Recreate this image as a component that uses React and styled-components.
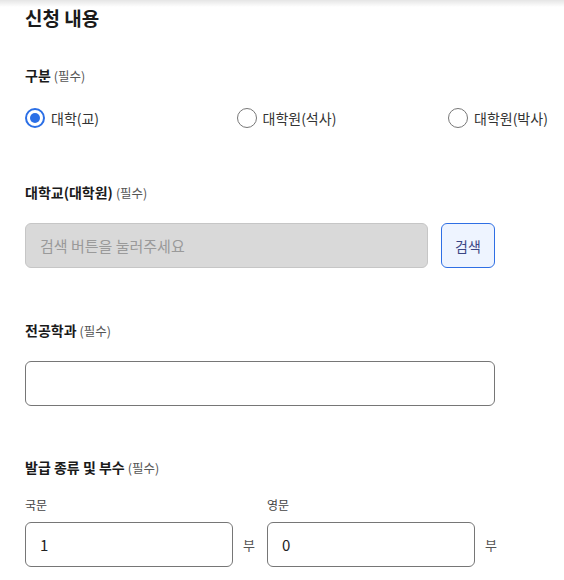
import React from 'react';
import styled, {createGlobalStyle} from 'styled-components';

const GlobalStyle = createGlobalStyle`
  html, body {
    margin: 0;
    padding: 0;
    background: #fff;
    font-family: "Noto Sans CJK KR", "Noto Sans", sans-serif;
    color: #222;
  }
`
const Page = styled.div`
  padding: 5px 0 0 25px;
  height: 580px;
  box-sizing: border-box;
  overflow: hidden;
  background: linear-gradient(to bottom, rgba(0,0,0,0.1) 0, rgba(0,0,0,0) 7px) no-repeat;
`
const Title = styled.h2`
  margin: 0 0 34px 0;
  font-size: 19px;
  line-height: 26px;
  font-weight: 700;
  color: #1a1a1a;
`
const Label = styled.div`
  font-size: 14px;
  line-height: 20px;
  height: 20px;
  font-weight: 700;
  color: #1a1a1a;
  margin-bottom: ${props => props.gap ?? 21}px;
`
const Required = styled.span`
  font-size: 12.5px;
  font-weight: 400;
  color: #555;
  margin-left: 3px;
`
const Section = styled.div`
  margin-bottom: ${props => props.gap ?? 52}px;
`
const RadioGrid = styled.div`
  display: grid;
  grid-template-columns: repeat(3, 211.5px);
  width: 640px;
`
const RadioItem = styled.label`
  display: flex;
  align-items: center;
  gap: 6px;
  height: 20px;
  font-size: 14px;
  color: #333;
  white-space: nowrap;
`
const RadioCircle = styled.span`
  box-sizing: border-box;
  width: 20px;
  height: 20px;
  border-radius: 50%;
  border: ${props => props.checked ? '2px solid #2b6fe6' : '1.5px solid #777'};
  display: flex;
  align-items: center;
  justify-content: center;
  &::after {
    content: '';
    width: 10px;
    height: 10px;
    border-radius: 50%;
    background: #2b6fe6;
    display: ${props => props.checked ? 'block' : 'none'};
  }
`
const Row = styled.div`
  display: flex;
  align-items: center;
  width: ${props => props.width ? `${props.width}px` : 'auto'};
  gap: ${props => props.gap ?? 13}px;
`
const Field = styled.div`
  box-sizing: border-box;
  height: 45px;
  flex: ${props => props.width ? `0 0 ${props.width}px` : '1'};
  border: 1px solid ${props => props.disabled ? '#c6c6c6' : '#767676'};
  background: ${props => props.disabled ? '#d9d9d9' : '#fff'};
  border-radius: 6px;
  padding: 0 14px;
  display: flex;
  align-items: center;
  font-size: 15px;
  color: ${props => props.disabled ? '#9a9a9a' : '#222'};
`
const SearchButton = styled.button`
  box-sizing: border-box;
  width: 54px;
  height: 45px;
  border: 1px solid #2f6fe4;
  background: #eef4ff;
  border-radius: 6px;
  font-family: inherit;
  font-size: 14px;
  color: #3b4684;
  padding: 0;
`
const SubLabel = styled.div`
  font-size: 12px;
  line-height: 16px;
  height: 16px;
  color: #444;
  margin: 20px 0 9px 0;
`
const Columns = styled.div`
  display: flex;
  gap: 12px;
`
const Column = styled.div`
  display: flex;
  flex-direction: column;
`
const Unit = styled.span`
  font-size: 13px;
  color: #555;
  margin-left: 10px;
`

const types = ['대학(교)', '대학원(석사)', '대학원(박사)'];

export default function App() {
  return (
    <Page>
      <GlobalStyle/>
      <Title>신청 내용</Title>
      <Section gap={54}>
        <Label gap={23}>구분<Required>(필수)</Required></Label>
        <RadioGrid>
          {types.map((t, i) => (
            <RadioItem key={t}>
              <RadioCircle checked={i === 0}/>
              {t}
            </RadioItem>
          ))}
        </RadioGrid>
      </Section>
      <Section>
        <Label>대학교(대학원)<Required>(필수)</Required></Label>
        <Row width={470}>
          <Field disabled>검색 버튼을 눌러주세요</Field>
          <SearchButton>검색</SearchButton>
        </Row>
      </Section>
      <Section gap={51}>
        <Label>전공학과<Required>(필수)</Required></Label>
        <Row width={470}>
          <Field/>
        </Row>
      </Section>
      <Section gap={0}>
        <Label gap={0}>발급 종류 및 부수<Required>(필수)</Required></Label>
        <Columns>
          <Column>
            <SubLabel>국문</SubLabel>
            <Row gap={0}>
              <Field width={208}>1</Field>
              <Unit>부</Unit>
            </Row>
          </Column>
          <Column>
            <SubLabel>영문</SubLabel>
            <Row gap={0}>
              <Field width={208}>0</Field>
              <Unit>부</Unit>
            </Row>
          </Column>
        </Columns>
      </Section>
    </Page>
  )
}
